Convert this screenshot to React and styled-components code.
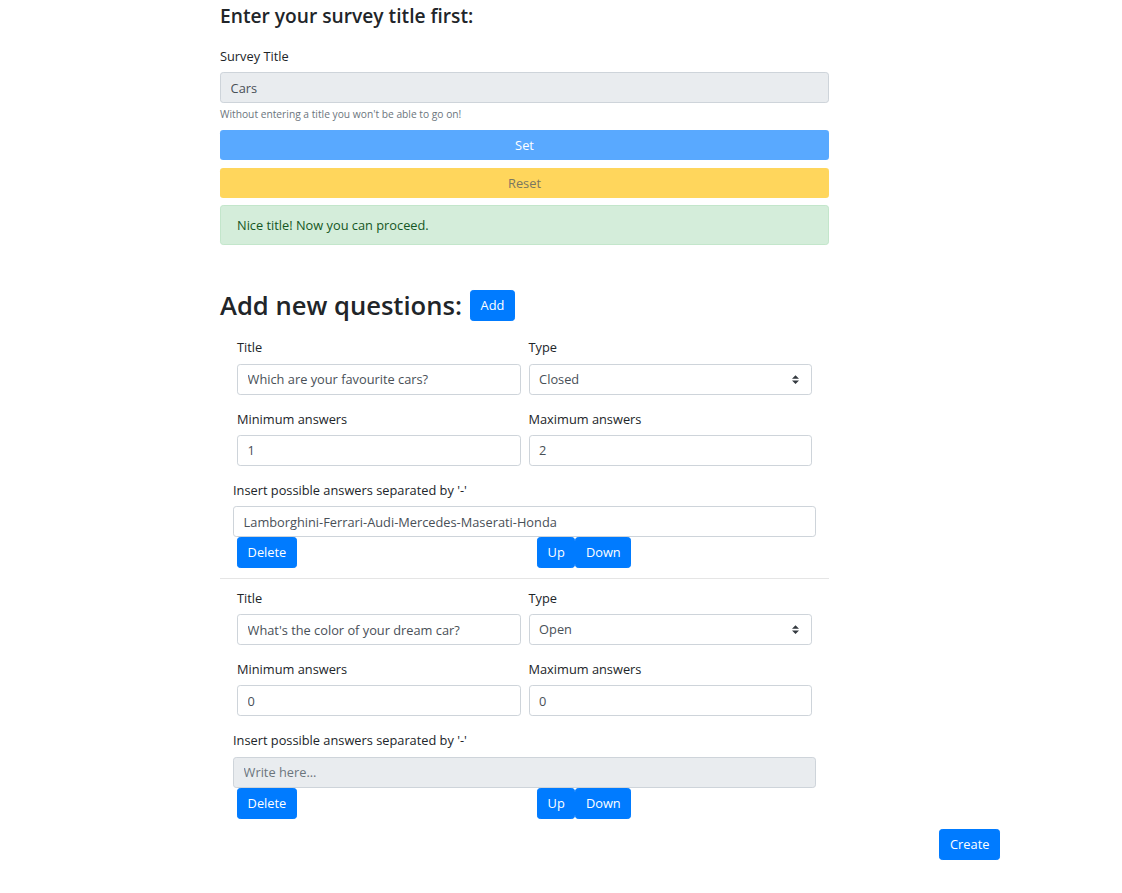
import React from 'react'
import styled, { createGlobalStyle } from 'styled-components'

const questions = [
  {
    id: 1,
    title: 'Which are your favourite cars?',
    type: 'Closed',
    min: '1',
    max: '2',
    answers: 'Lamborghini-Ferrari-Audi-Mercedes-Maserati-Honda',
  },
  {
    id: 2,
    title: "What's the color of your dream car?",
    type: 'Open',
    min: '0',
    max: '0',
    answers: '',
  },
]

const GlobalStyle = createGlobalStyle`
  body {
    margin: 0;
    background: #fff;
    color: #212529;
    font-family: "Open Sans", "Noto Sans", "Liberation Sans", sans-serif;
    font-size: 12.8px;
    line-height: 1.5;
  }
  * {
    box-sizing: border-box;
  }
`

const SelectArrows = () => (
  <svg width="7" height="9" viewBox="0 0 4 5">
    <path d="M2 0L0 2h4zm0 5L0 3h4z" fill="#343a40" />
  </svg>
)

const Question = ({ q, last }) => (
  <QuestionBlock>
    <FormRow>
      <Col>
        <Label>Title</Label>
        <Input defaultValue={q.title} />
      </Col>
      <Col>
        <Label>Type</Label>
        <Select>
          <span>{q.type}</span>
          <SelectArrows />
        </Select>
      </Col>
    </FormRow>
    <FormRow>
      <Col>
        <Label>Minimum answers</Label>
        <Input defaultValue={q.min} />
      </Col>
      <Col>
        <Label>Maximum answers</Label>
        <Input defaultValue={q.max} />
      </Col>
    </FormRow>
    <Label>Insert possible answers separated by '-'</Label>
    <Input
      defaultValue={q.answers}
      placeholder="Write here..."
      readOnly={!q.answers}
      $muted={!q.answers}
    />
    <ActionRow>
      <div>
        <Button>Delete</Button>
      </div>
      <div>
        <Button>Up</Button>
        <Button>Down</Button>
      </div>
    </ActionRow>
    {!last && <Divider />}
  </QuestionBlock>
)

export default function App() {
  return (
    <Page>
      <GlobalStyle />
      <Column>
        <SubTitle>Enter your survey title first:</SubTitle>
        <Label>Survey Title</Label>
        <Input defaultValue="Cars" readOnly $muted />
        <Hint>Without entering a title you won't be able to go on!</Hint>
        <BlockButton $bg="#59a9ff" $color="#fff">Set</BlockButton>
        <BlockButton $bg="#ffd65c" $color="#7a7761">Reset</BlockButton>
        <Alert>Nice title! Now you can proceed.</Alert>

        <Heading>
          Add new questions:
          <Button>Add</Button>
        </Heading>

        {questions.map((q, i) => (
          <Question key={q.id} q={q} last={i === questions.length - 1} />
        ))}
      </Column>
      <Footer>
        <Button>Create</Button>
      </Footer>
    </Page>
  )
}

const Page = styled.div`
  width: 780px;
  margin-left: 220px;
  padding-top: 4px;
  padding-bottom: 30px;
`

const Column = styled.div`
  width: 609px;
`

const SubTitle = styled.h4`
  margin: 0 0 20px;
  font-size: 19.2px;
  font-weight: 600;
  line-height: 1.2;
`

const Label = styled.label`
  display: block;
  margin-bottom: 6px;
  font-size: 12.8px;
  line-height: 19.2px;
`

const Input = styled.input`
  display: block;
  width: 100%;
  height: 31px;
  padding: 4.8px 9.6px;
  border: 1px solid #ced4da;
  border-radius: 3.2px;
  background: ${p => (p.$muted ? '#e9ecef' : '#fff')};
  color: #495057;
  font-family: inherit;
  font-size: 12.8px;
  line-height: 19.2px;
  outline: none;

  &::placeholder {
    color: #6c757d;
  }
`

const Select = styled.div`
  display: flex;
  align-items: center;
  justify-content: space-between;
  height: 31px;
  padding: 0 12px 0 9.6px;
  border: 1px solid #ced4da;
  border-radius: 3.2px;
  color: #495057;
`

const Hint = styled.small`
  display: block;
  margin: 4px 0 7px;
  color: #6c757d;
  font-size: 10.24px;
  line-height: 15.4px;
`

const BlockButton = styled.div`
  height: 30px;
  margin-bottom: 8px;
  border-radius: 3.2px;
  background: ${p => p.$bg};
  color: ${p => p.$color};
  line-height: 30px;
  text-align: center;
`

const Alert = styled.div`
  margin-top: -1px;
  padding: 10px 16px 9.6px;
  border: 1px solid #c3e6cb;
  border-radius: 3.2px;
  background: #d4edda;
  color: #155724;
  line-height: 19.2px;
`

const Heading = styled.h2`
  display: flex;
  align-items: center;
  gap: 8px;
  height: 31px;
  margin: 45px 0 17px;
  font-size: 25.6px;
  font-weight: 600;
  line-height: 1.2;
`

const Button = styled.button`
  height: 31px;
  padding: 0 9.6px;
  border: 1px solid #007bff;
  border-radius: 3.2px;
  background: #007bff;
  color: #fff;
  font-family: inherit;
  font-size: 12.8px;
  line-height: 19.2px;
  cursor: pointer;
`

const QuestionBlock = styled.div`
  padding: 0 13px;
`

const FormRow = styled.div`
  display: grid;
  grid-template-columns: 1fr 1fr;
  margin-bottom: 15px;
`

const Col = styled.div`
  padding: 0 4px;
`

const ActionRow = styled.div`
  display: grid;
  grid-template-columns: 1fr 1fr;
  padding: 0 4px;

  & > div:last-child {
    padding-left: 12.5px;
  }
`

const Divider = styled.hr`
  margin: 10px -13px 10px;
  border: 0;
  border-top: 1px solid rgba(0, 0, 0, 0.1);
`

const Footer = styled.div`
  display: flex;
  justify-content: flex-end;
  margin-top: 10px;
`
